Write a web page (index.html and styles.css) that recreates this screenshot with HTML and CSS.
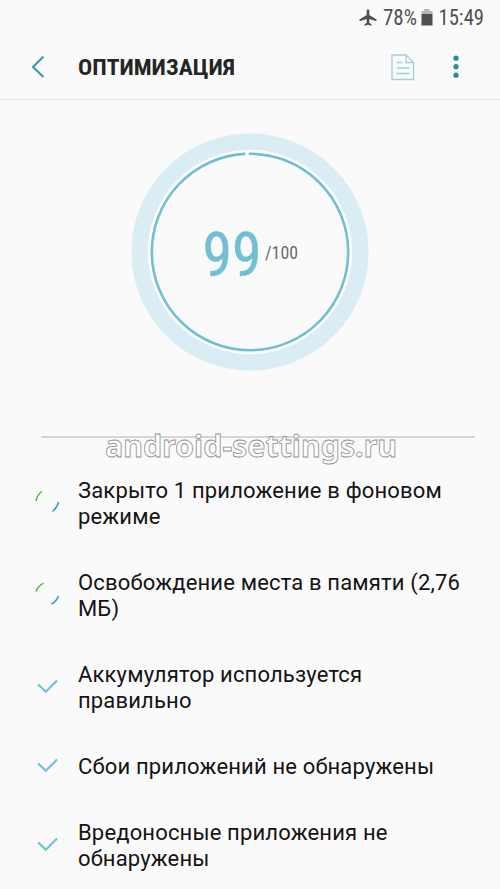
FILE: index.html
```html
<!DOCTYPE html>
<html lang="ru">
<head>
<meta charset="utf-8">
<title>Оптимизация</title>
<link rel="stylesheet" href="styles.css">
</head>
<body>
<div class="status">
  <svg class="plane" width="18" height="17" viewBox="0 0 18 17"><path d="M9 .3C9.900.3 10.300 1.200 10.300 2.300V6L17.500 10.500V12.200L10.300 10V13.800L12.600 15.500V16.700L9 15.800L5.400 16.700V15.500L7.700 13.800V10L.5 12.200V10.500L7.700 6V2.300C7.700 1.200 8.100.3 9 .3Z"/></svg>
  <svg class="cond" width="35" height="26"><text x="0" y="20" textLength="34" lengthAdjust="spacingAndGlyphs">78%</text></svg>
  <svg class="battery" width="12" height="17" viewBox="0 0 12 17"><path class="cap" d="M3 0H8.500V2H11.500V5H.5V2H3Z"/><path d="M.5 5H11.500V16.500H.5Z"/></svg>
  <svg class="cond" width="48" height="26"><text x="-.5" y="20" textLength="45.500" lengthAdjust="spacingAndGlyphs">15:49</text></svg>
</div>
<header class="bar">
  <svg class="back" width="14" height="24" viewBox="0 0 14 24"><path d="M12.500 1.500L2 12L12.500 22"/></svg>
  <svg class="title" width="160" height="30"><text x="0" y="23" textLength="157" lengthAdjust="spacingAndGlyphs">ОПТИМИЗАЦИЯ</text></svg>
  <svg class="report" width="24" height="27" viewBox="0 0 24 27"><path d="M1 1H15L22.500 8.500V25.500H1ZM15 1V8.500H22.500M5.500 8.500H11.500M5.500 14H18.500M5.500 19.500H18.500"/></svg>
  <svg class="more" width="6" height="24" viewBox="0 0 6 24"><circle cx="3" cy="3.200" r="2.600"/><circle cx="3" cy="11.700" r="2.600"/><circle cx="3" cy="20.200" r="2.600"/></svg>
</header>
<main>
  <svg class="gauge" width="240" height="240" viewBox="0 0 240 240">
    <circle class="halo" cx="120" cy="120" r="110.300"/>
    <circle class="rim" cx="120" cy="120" r="100.500"/>
    <circle class="ring" cx="120" cy="120" r="98.200" pathLength="1000" stroke-dasharray="994 6" transform="rotate(-90.700 120 120)"/>
    <text class="score" x="72.500" y="143.500" textLength="59" lengthAdjust="spacingAndGlyphs">99</text>
    <text class="total" x="135" y="127" textLength="33" lengthAdjust="spacingAndGlyphs">/100</text>
  </svg>
  <div class="divider">
    <svg class="mark" width="300" height="44"><text x="4" y="31.500" textLength="292" lengthAdjust="spacingAndGlyphs">android-settings.ru</text></svg>
  </div>
  <ul class="tasks">
    <li><svg class="icon" viewBox="0 0 24 24"><path class="green" d="M1 11Q2 5 6.800 1.500"/><path class="blue" d="M23.500 12Q22.500 17.500 17.500 21.500"/></svg><span>Закрыто 1 приложение в фоновом<br>режиме</span></li>
    <li><svg class="icon" viewBox="0 0 24 24"><path class="green" d="M1 9.500Q3 4 8.500 1.200"/><path class="blue" d="M23.300 14Q21.500 19.500 16.300 22.200"/></svg><span>Освобождение места в памяти (2,76<br>МБ)</span></li>
    <li><svg class="icon" viewBox="0 0 24 24"><path class="check" d="M3.200 10.500L10.800 17.800L22 6.500"/></svg><span>Аккумулятор используется<br>правильно</span></li>
    <li><svg class="icon" viewBox="0 0 24 24"><path class="check" d="M3.200 10.500L10.800 17.800L22 6.500"/></svg><span>Сбои приложений не обнаружены</span></li>
    <li><svg class="icon" viewBox="0 0 24 24"><path class="check" d="M3.200 10.500L10.800 17.800L22 6.500"/></svg><span>Вредоносные приложения не<br>обнаружены</span></li>
  </ul>
</main>
</body>
</html>
```
FILE: styles.css
```css
* { box-sizing: border-box; }
body {
  margin: 0;
  height: 889px;
  overflow: hidden;
  background: #fafafa;
  color: #141414;
  font-family: Roboto, "Liberation Sans", sans-serif;
}
svg { display: block; flex: none; fill: none; overflow: visible; }
.status {
  display: flex;
  height: 34px;
  padding: 5px 0 0 359px;
}
.status svg { fill: #505050; }
.plane { margin: 4px 6px 0 0; }
.cond { font-size: 21.5px; font-stretch: condensed; }
.battery { margin: 4px 6px 0 3px; }
.status .cap { fill: #b8b8b8; }
.bar {
  display: flex;
  align-items: center;
  height: 66px;
  padding-left: 31px;
  border-bottom: 1px solid #e3e4e5;
}
.back { stroke: #3b94ad; stroke-width: 2; margin-right: 33px; }
.title { font-size: 22.5px; font-weight: 700; font-stretch: condensed; fill: #252525; }
.report { stroke: #a3cfdb; stroke-width: 1.3; margin: 1px 0 0 153px; }
.more { fill: #298da0; margin-left: 37.5px; }
.gauge { margin: 32px 0 0 130px; }
.halo { stroke: #daedf5; stroke-width: 16.5; }
.rim { stroke: #fff; stroke-width: 3; }
.ring { stroke: #70bfd3; stroke-width: 2.6; }
.score { fill: #70bfd3; stroke: #70bfd3; stroke-width: .5; font-size: 61px; font-stretch: condensed; }
.total { fill: #6b6b6b; font-size: 18px; font-stretch: condensed; }
.divider {
  height: 40px;
  margin: 64px 25px 0 41px;
  border-top: 2px solid #d5d6d7;
}
.mark {
  position: relative;
  top: -13px;
  left: 60px;
  fill: #fcfcfc;
  stroke: #909090;
  stroke-width: .8;
  font: 700 30px "Noto Sans", sans-serif;
}
.tasks {
  display: grid;
  gap: 40px;
  margin: 0;
  padding: 1px 0 0 35px;
  list-style: none;
}
.tasks li {
  display: flex;
  align-items: center;
  font-size: 22px;
  line-height: 26px;
  letter-spacing: .16px;
  white-space: nowrap;
}
.tasks span { position: relative; top: .5px; }
.icon { width: 24px; height: 24px; margin: -2px 19px 0 0; }
.green { stroke: #56b446; stroke-width: 1.5; }
.blue { stroke: #2d9fba; stroke-width: 1.5; }
.check { stroke: #70c2d0; stroke-width: 2.2; }
```
